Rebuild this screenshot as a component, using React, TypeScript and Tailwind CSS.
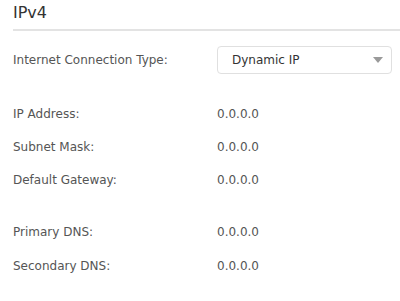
export default function App() {
  const rows1 = [
    { label: "IP Address:", value: "0.0.0.0" },
    { label: "Subnet Mask:", value: "0.0.0.0" },
    { label: "Default Gateway:", value: "0.0.0.0" },
  ];
  const rows2 = [
    { label: "Primary DNS:", value: "0.0.0.0" },
    { label: "Secondary DNS:", value: "0.0.0.0" },
  ];

  return (
    <div className="w-[400px] h-[301px] bg-white pl-[13px] overflow-hidden font-['DejaVu_Sans',sans-serif]">
      <div className="h-[31px] border-b-2 border-[#e3e3e3] flex items-center">
        <h2 className="text-[16px] leading-none text-[#333] -mt-[3px]">IPv4</h2>
      </div>

      <div className="mt-[15px] flex items-center h-[28px]">
        <div className="w-[204px] text-[12px] text-[#555]">Internet Connection Type:</div>
        <div className="w-[175px] h-[28px] border border-[#e0e0e0] rounded-[4px] flex items-center justify-between pl-[14px] pr-[8px]">
          <span className="text-[12px] text-[#333]">Dynamic IP</span>
          <svg width="10" height="6" viewBox="0 0 10 6">
            <path d="M0 0 L10 0 L5 6 Z" fill="#9a9a9a" />
          </svg>
        </div>
      </div>

      <div className="mt-[23px]">
        {rows1.map((r) => (
          <div key={r.label} className="flex items-center h-[33px] text-[12px]">
            <div className="w-[204px] text-[#555]">{r.label}</div>
            <div className="text-[#555]">{r.value}</div>
          </div>
        ))}
      </div>

      <div className="mt-[19px]">
        {rows2.map((r) => (
          <div key={r.label} className="flex items-center h-[34px] text-[12px]">
            <div className="w-[204px] text-[#555]">{r.label}</div>
            <div className="text-[#555]">{r.value}</div>
          </div>
        ))}
      </div>
    </div>
  );
}
